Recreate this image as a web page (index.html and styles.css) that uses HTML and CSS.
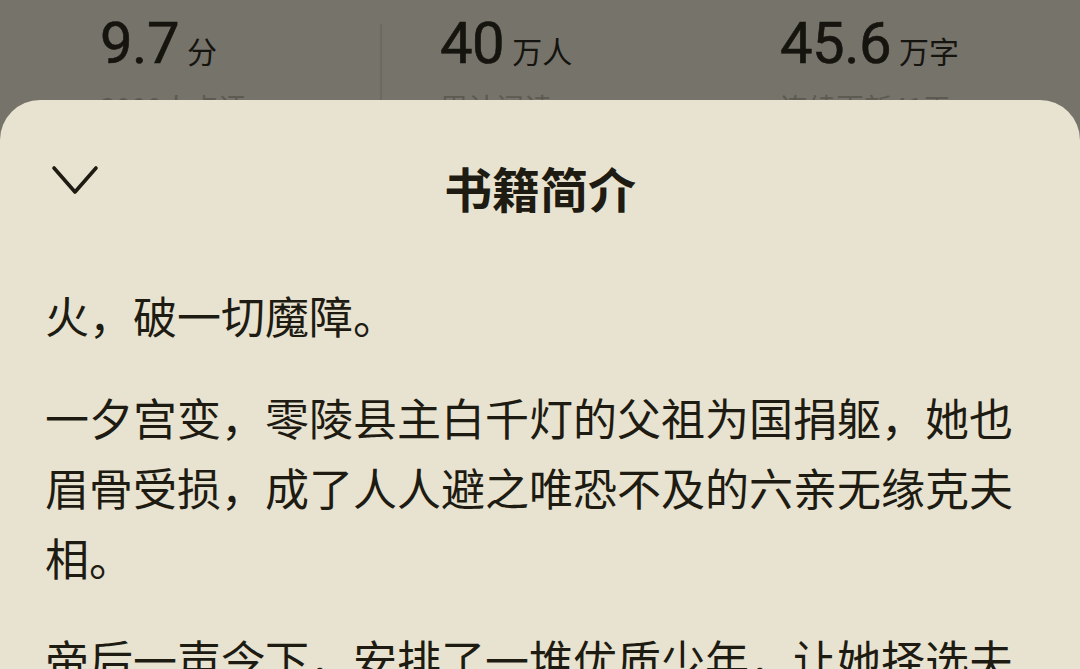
FILE: index.html
```html
<!DOCTYPE html>
<html lang="zh-CN">
<head>
    <meta charset="UTF-8">
    <meta name="viewport" content="width=device-width, initial-scale=1.0">
    <title>书籍简介</title>
    <link rel="stylesheet" href="styles.css">
</head>
<body>
    <div class="stats">
        <div class="stat">
            <div class="stat-value">9.7<span class="stat-unit">分</span></div>
            <div class="stat-label">3000人点评 ›</div>
        </div>
        <div class="stat stat-divided">
            <div class="stat-value">40<span class="stat-unit">万人</span></div>
            <div class="stat-label">累计阅读</div>
        </div>
        <div class="stat">
            <div class="stat-value">45.6<span class="stat-unit">万字</span></div>
            <div class="stat-label">连续更新41天</div>
        </div>
    </div>

    <div class="sheet">
        <div class="sheet-header">
            <button class="close-button">
                <svg width="48" height="32" viewBox="0 0 48 32" fill="none" stroke="currentColor" stroke-width="3.6" stroke-linecap="round" stroke-linejoin="round">
                    <polyline points="3,4 24,28 45,4"></polyline>
                </svg>
            </button>
            <h1 class="sheet-title">书籍简介</h1>
            <span></span>
        </div>
        <div class="intro">
            <p>火，破一切魔障。</p>
            <p>一夕宫变，零陵县主白千灯的父祖为国捐躯，她也眉骨受损，成了人人避之唯恐不及的六亲无缘克夫相。</p>
            <p>帝后一声令下，安排了一堆优质少年，让她择选夫婿。</p>
        </div>
    </div>
</body>
</html>
```

FILE: styles.css
```css
* {
    box-sizing: border-box;
}
html, body {
    height: 100%;
}
body {
    margin: 0;
    overflow: hidden;
    background-color: #76736a;
    font-family: 'Noto Sans CJK SC', 'Noto Sans', sans-serif;
    color: #1e1b12;
}
.stats {
    display: flex;
    height: 100px;
    padding: 24px 20px 0 40px;
}
.stat {
    flex: 1;
    padding-left: 60px;
}
.stat-divided {
    border-left: 2px solid #6c6960;
    padding-left: 58px;
}
.stat-value {
    margin-top: -10px;
    font-family: 'Roboto', 'Noto Sans CJK SC', sans-serif;
    font-size: 58px;
    font-weight: 400;
    line-height: 58px;
    color: #15140f;
    letter-spacing: -0.5px;
    -webkit-text-stroke: 0.6px #15140f;
}
.stat-unit {
    font-family: 'Noto Sans CJK SC', sans-serif;
    font-size: 30px;
    font-weight: 400;
    margin-left: 8px;
    letter-spacing: 0;
    -webkit-text-stroke: 0;
}
.stat-label {
    margin-top: 8px;
    font-size: 28px;
    color: #5d5a52;
    white-space: nowrap;
}
.sheet {
    position: relative;
    z-index: 1;
    height: 600px;
    background-color: #e8e3d0;
    border-radius: 40px 40px 0 0;
    padding: 0 45px;
}
.sheet-header {
    display: grid;
    grid-template-columns: 1fr auto 1fr;
    align-items: center;
    height: 180px;
    padding-bottom: 6px;
}
.close-button {
    justify-self: start;
    margin: 0 0 14px 6px;
    padding: 0;
    border: none;
    background: none;
    color: #1e1b12;
    display: flex;
}
.sheet-title {
    margin: 0;
    font-size: 48px;
    font-weight: 700;
    line-height: 1;
}
.intro p {
    margin: 0 0 32px;
    font-size: 44px;
    line-height: 70px;
}
```
